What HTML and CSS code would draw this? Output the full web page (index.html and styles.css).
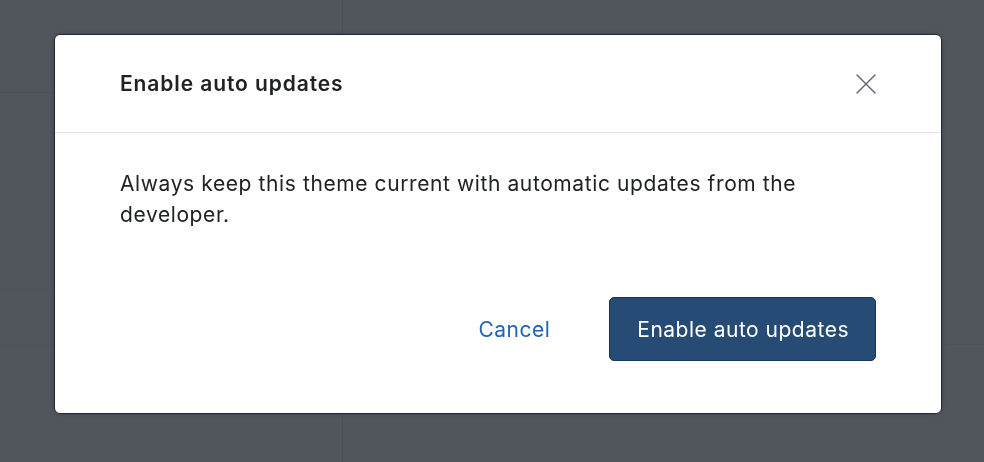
FILE: index.html
```html
<!DOCTYPE html>
<html lang="en">

<head>
    <meta charset="UTF-8">
    <meta name="viewport" content="width=device-width, initial-scale=1.0">
    <title>Enable auto updates</title>
    <link rel="stylesheet" href="styles.css">
</head>

<body>

    <div class="page">
        <div class="page-side">
            <div class="side-row first"></div>
            <div class="side-row second"></div>
            <div class="side-row third"></div>
        </div>
        <div class="page-main">
            <div class="main-row"></div>
        </div>
    </div>

    <div class="overlay">
        <div class="modal">
            <div class="modal-header">
                <h2 class="modal-title">Enable auto updates</h2>
                <button class="close-button" type="button" aria-label="Close">
                    <svg width="20" height="20" viewBox="0 0 20 20">
                        <path d="M1 1 L19 19 M19 1 L1 19" stroke="#5c6370" stroke-width="1.4" fill="none" stroke-linecap="round" />
                    </svg>
                </button>
            </div>
            <div class="modal-body">
                <p>Always keep this theme current with automatic updates from the developer.</p>
            </div>
            <div class="modal-footer">
                <button class="cancel-button" type="button">Cancel</button>
                <button class="primary-button" type="button">Enable auto updates</button>
            </div>
        </div>
    </div>

</body>

</html>
```

FILE: styles.css
```css
html, body {
    margin: 0;
    height: 100%;
}

body {
    font-family: Inter, "Noto Sans", "Liberation Sans", sans-serif;
    background-color: #f4f6f8;
    overflow: hidden;
}

/* page behind the overlay */
.page {
    display: flex;
    height: 100%;
}

.page-side {
    width: 342px;
    border-right: 1px solid #c9cdd1;
}

.side-row.first {
    height: 92px;
    border-bottom: 1px solid #c9cdd1;
}

.side-row.second {
    height: 197px;
    border-bottom: 1px solid #d6d9dc;
}

.side-row.third {
    height: 54px;
    border-bottom: 1px solid #d6d9dc;
}

.page-main {
    flex: 1;
}

.main-row {
    height: 344px;
    border-bottom: 1px solid #d6d9dc;
}

.overlay {
    position: fixed;
    inset: 0;
    background-color: rgba(56, 62, 70, 0.87);
    padding: 34px 42px 48px 54px;
    box-sizing: border-box;
}

.modal {
    height: 380px;
    background: #fff;
    border: 1px solid #1f2a37;
    border-radius: 6px;
    box-sizing: border-box;
    display: flex;
    flex-direction: column;
    box-shadow: 0 0 4px rgba(0, 0, 0, 0.25);
}

.modal-header {
    height: 98px;
    box-sizing: border-box;
    display: flex;
    align-items: center;
    justify-content: space-between;
    padding: 0 65px;
    border-bottom: 1px solid #e1e3e5;
}

.modal-title {
    margin: 0;
    font-size: 21px;
    font-weight: 600;
    color: #202223;
    letter-spacing: 0.9px;
}

.close-button {
    background: none;
    border: none;
    padding: 0;
    width: 20px;
    height: 20px;
    cursor: pointer;
    display: flex;
}

.modal-body {
    padding: 35px 65px 0;
}

.modal-body p {
    margin: 0;
    font-size: 21px;
    line-height: 31px;
    letter-spacing: 0.6px;
    color: #202223;
    max-width: 720px;
}

.modal-footer {
    margin-top: auto;
    display: flex;
    justify-content: flex-end;
    align-items: center;
    gap: 59px;
    padding: 0 65px 52px;
}

.cancel-button {
    background: none;
    border: none;
    font-family: inherit;
    font-size: 21px;
    letter-spacing: 0.5px;
    color: #1f63b4;
    cursor: pointer;
    padding: 0;
}

.primary-button {
    height: 64px;
    padding: 0 26px 0 27px;
    background-color: #264b75;
    border: 1px solid #17365a;
    border-radius: 5px;
    color: #fff;
    font-family: inherit;
    font-size: 21px;
    letter-spacing: 0.5px;
    cursor: pointer;
}
```
